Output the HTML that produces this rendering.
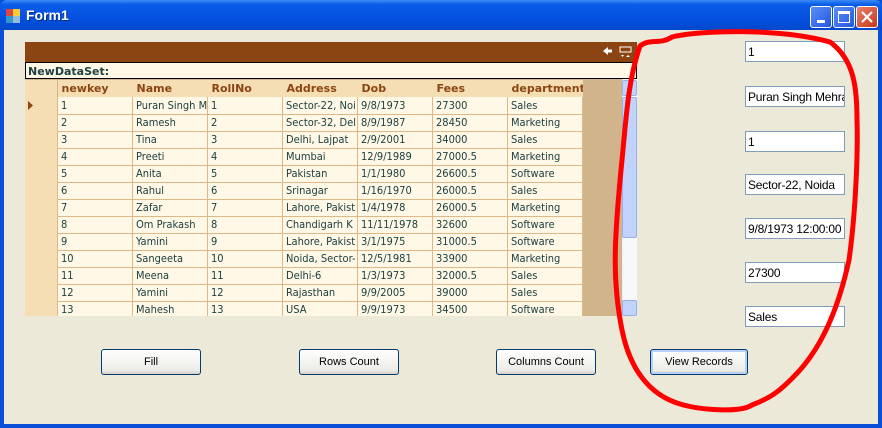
<!DOCTYPE html>
<html><head><style>
*{margin:0;padding:0;box-sizing:border-box}
body{width:882px;height:428px;overflow:hidden;background:#0a4fd8;font-family:Tahoma,"DejaVu Sans","Liberation Sans",sans-serif;position:relative}
.title{position:absolute;left:0;top:0;width:882px;height:30px;background:linear-gradient(#3c8cf7 0,#0a5de8 15%,#0550e0 60%,#0348cc 100%);border-radius:7px 7px 0 0}
.title span{position:absolute;left:26px;top:7px;color:#fff;font-weight:bold;font-size:14px;font-family:"Liberation Sans",sans-serif;text-shadow:1px 1px #0a2a80}
.client{position:absolute;left:4px;top:30px;width:874px;height:394px;background:#ECE9D8}
.a{position:absolute}
.grid{position:absolute;left:25px;top:42px;width:612px;height:274px;background:#D2B48C;overflow:hidden}
.cap{position:absolute;left:0;top:0;width:612px;height:20px;background:#8B4513}
.nds{position:absolute;left:0;top:20px;width:612px;height:17px;background:#FFF8E7;border:1px solid #000;font-size:11px;font-weight:bold;color:#1e4040;padding:2px 2px}
.rh{position:absolute;left:0;top:38px;width:32px;height:240px;background:#F5DEB3}
table{position:absolute;left:32px;top:38px;width:525px;border-collapse:collapse;font-size:11px;font-family:"DejaVu Sans Condensed","Liberation Sans Narrow","Liberation Sans",sans-serif;table-layout:fixed}
th{height:17px;background:#F5DEB3;color:#8B4513;text-align:left;padding-left:4px;font-weight:bold;font-size:11px;font-family:"DejaVu Sans","Liberation Sans",sans-serif;width:75px;white-space:nowrap;overflow:hidden}
td{height:17px;width:75px;background:#FFF8E7;border:1px solid #DEB887;border-top:none;color:#1e4040;padding-left:3px;white-space:nowrap;overflow:hidden;max-width:75px}
.tb{position:absolute;left:745px;width:100px;height:21px;background:#fff;border:1px solid #7F9DB9;font-size:12px;padding:3px 2px;font-family:"Liberation Sans",sans-serif;white-space:nowrap;overflow:hidden;letter-spacing:-0.2px}
.btn{position:absolute;top:349px;height:26px;border:1px solid #003C74;border-radius:3px;background:linear-gradient(#fff,#ECEBE6 85%,#D6D0C5);font-size:11px;text-align:center;line-height:24px;font-family:"Liberation Sans Narrow","Liberation Sans",sans-serif}
.wb{position:absolute;top:6px;width:22px;height:22px;border:1px solid #fff;border-radius:3px;background:linear-gradient(135deg,#5a8ff7,#2456e0)}
</style></head><body>
<div class="title"><svg class="a" style="left:6px;top:9px" width="14" height="14"><rect x="0" y="0" width="7" height="7" fill="#d44"/><rect x="7" y="0" width="7" height="7" fill="#fc3"/><rect x="0" y="7" width="7" height="7" fill="#39c"/><rect x="7" y="7" width="7" height="7" fill="#9bd"/></svg><span>Form1</span>
<div class="wb" style="left:810px"><div class="a" style="left:6px;top:13px;width:8px;height:3px;background:#fff"></div></div>
<div class="wb" style="left:833px"><div class="a" style="left:4px;top:4px;width:12px;height:12px;border:1px solid #fff;border-top-width:3px"></div></div>
<div class="wb" style="left:856px;background:linear-gradient(135deg,#e8806a,#c8381c)"><svg class="a" style="left:3px;top:3px" width="14" height="14"><path d="M2 2L12 12M12 2L2 12" stroke="#fff" stroke-width="2.2"/></svg></div>
</div>
<div class="client"></div>
<div class="grid">
<div class="cap"><svg class="a" style="left:576px;top:3px" width="34" height="14"><path d="M2 6L7 2V4.5H11V7.5H7V10Z" fill="#fff"/><rect x="19" y="2" width="11" height="5" fill="none" stroke="#fff"/><path d="M20 10h3l-1.5 2zM25 12h4l-2-2z" fill="#fff"/></svg></div>
<div class="nds">NewDataSet:</div>
<div class="rh"><svg class="a" style="left:3px;top:21px" width="6" height="9"><path d="M0 0L5 4.5L0 9Z" fill="#8B4513"/></svg></div>
<table>
<tr><th>newkey</th><th>Name</th><th>RollNo</th><th>Address</th><th>Dob</th><th>Fees</th><th>department</th></tr>
<tr><td>1</td><td>Puran Singh M</td><td>1</td><td>Sector-22, Noi</td><td>9/8/1973</td><td>27300</td><td>Sales</td></tr>
<tr><td>2</td><td>Ramesh</td><td>2</td><td>Sector-32, Del</td><td>8/9/1987</td><td>28450</td><td>Marketing</td></tr>
<tr><td>3</td><td>Tina</td><td>3</td><td>Delhi, Lajpat</td><td>2/9/2001</td><td>34000</td><td>Sales</td></tr>
<tr><td>4</td><td>Preeti</td><td>4</td><td>Mumbai</td><td>12/9/1989</td><td>27000.5</td><td>Marketing</td></tr>
<tr><td>5</td><td>Anita</td><td>5</td><td>Pakistan</td><td>1/1/1980</td><td>26600.5</td><td>Software</td></tr>
<tr><td>6</td><td>Rahul</td><td>6</td><td>Srinagar</td><td>1/16/1970</td><td>26000.5</td><td>Sales</td></tr>
<tr><td>7</td><td>Zafar</td><td>7</td><td>Lahore, Pakist</td><td>1/4/1978</td><td>26000.5</td><td>Marketing</td></tr>
<tr><td>8</td><td>Om Prakash</td><td>8</td><td>Chandigarh K</td><td>11/11/1978</td><td>32600</td><td>Software</td></tr>
<tr><td>9</td><td>Yamini</td><td>9</td><td>Lahore, Pakist</td><td>3/1/1975</td><td>31000.5</td><td>Software</td></tr>
<tr><td>10</td><td>Sangeeta</td><td>10</td><td>Noida, Sector-</td><td>12/5/1981</td><td>33900</td><td>Marketing</td></tr>
<tr><td>11</td><td>Meena</td><td>11</td><td>Delhi-6</td><td>1/3/1973</td><td>32000.5</td><td>Sales</td></tr>
<tr><td>12</td><td>Yamini</td><td>12</td><td>Rajasthan</td><td>9/9/2005</td><td>39000</td><td>Sales</td></tr>
<tr><td>13</td><td>Mahesh</td><td>13</td><td>USA</td><td>9/9/1973</td><td>34500</td><td>Software</td></tr>
</table>
<div class="a" style="left:597px;top:37px;width:15px;height:237px;background:#F7F8FA;border-left:1px solid #eee"></div>
<div class="a" style="left:597px;top:38px;width:15px;height:16px;background:#C1D3FB;border:1px solid #98B1E8;border-radius:2px"></div>
<div class="a" style="left:597px;top:55px;width:15px;height:141px;background:#C1D3FB;border:1px solid #98B1E8;border-radius:2px"></div>
<div class="a" style="left:597px;top:258px;width:15px;height:16px;background:#C1D3FB;border:1px solid #98B1E8;border-radius:2px"></div>
</div>
<div class="tb" style="top:41px">1</div>
<div class="tb" style="top:86px">Puran Singh Mehra</div>
<div class="tb" style="top:131px">1</div>
<div class="tb" style="top:174px">Sector-22, Noida</div>
<div class="tb" style="top:218px">9/8/1973 12:00:00</div>
<div class="tb" style="top:262px">27300</div>
<div class="tb" style="top:306px">Sales</div>
<div class="btn" style="left:101px;width:100px">Fill</div>
<div class="btn" style="left:299px;width:100px">Rows Count</div>
<div class="btn" style="left:496px;width:100px">Columns Count</div>
<div class="btn" style="left:650px;width:98px;box-shadow:inset 0 0 0 2px #B9D1F8">View Records</div>
<svg class="a" style="left:0;top:0" width="882" height="428"><path d="M640 46C650 38 660 45 672 37C700 30 780 28 830 42C855 60 857 90 857 120C858 150 856 210 849 260C838 310 822 345 800 370C780 392 770 398 752 405C740 413 700 410 680 404C650 395 630 370 622 330C612 280 614 240 622 160C626 120 628 80 640 46Z" fill="none" stroke="#f00" stroke-width="5" stroke-linejoin="round"/></svg>
</body></html>
